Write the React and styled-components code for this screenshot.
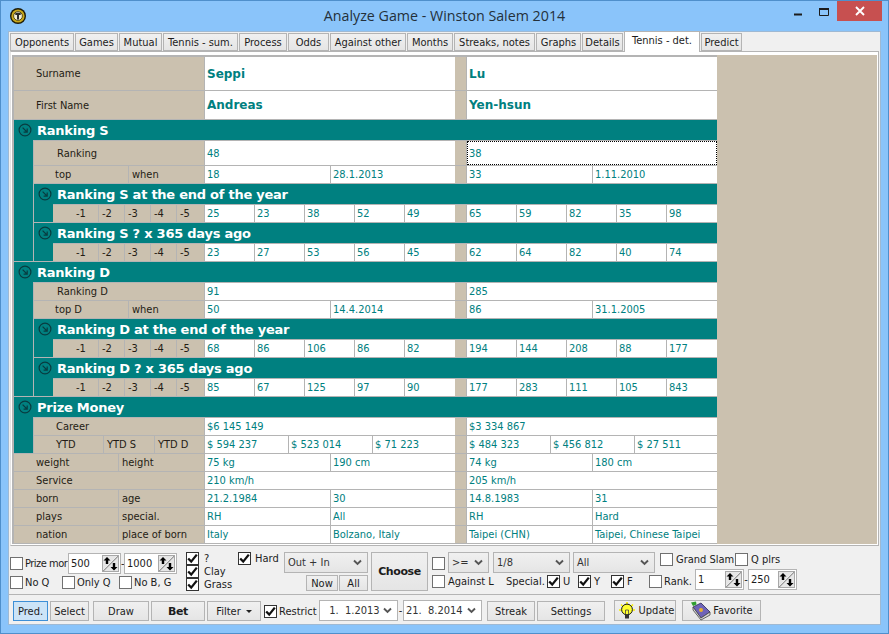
import React from 'react'
import styled, {createGlobalStyle} from 'styled-components'

const LINE = '#b4b4b4'
const TAN = '#cbc1af'
const TEAL = '#008080'

const GlobalStyle = createGlobalStyle`
  html, body {
    margin: 0;
    padding: 0;
    overflow: hidden;
    background: #8ac4fa;
  }
  * {
    box-sizing: border-box;
  }
`

const Window = styled.div`
  width: 889px;
  height: 634px;
  display: flex;
  flex-direction: column;
  padding: 0 7px 8px;
  background: #8ac4fa;
  border: 1px solid #4f8fcb;
  font-family: "DejaVu Sans Condensed", "Liberation Sans", Arial, sans-serif;
  font-size: 11px;
  color: #1c1c1c;
`

const TitleBar = styled.div`
  height: 30px;
  flex: none;
  display: grid;
  grid-template-columns: 1fr auto 1fr;
  align-items: start;
`

const AppIcon = styled.svg`
  width: 18px;
  height: 18px;
  margin: 6px 0 0 1px;
  display: block;
`

const Title = styled.div`
  font-family: "Open Sans", sans-serif;
  font-size: 14.25px;
  line-height: 30px;
  color: #24303a;
`

const WinControls = styled.div`
  display: flex;
  justify-content: flex-end;
  margin-right: -1px;
`

const WinGlyph = styled.svg`
  width: 26px;
  height: 20px;
  display: block;
`

const CloseBtn = styled.div`
  width: 45px;
  height: 20px;
  background: #c75050;
  display: flex;
  align-items: center;
  justify-content: center;
`

const Client = styled.div`
  flex: 1;
  min-height: 0;
  display: flex;
  flex-direction: column;
  background: #f0f0f0;
  border: 1px solid #9fb9d3;
`

const TabRow = styled.div`
  display: flex;
  gap: 1px;
  height: 19px;
  flex: none;
  padding: 1px 0 0 1px;
  position: relative;
  z-index: 1;
`

const Tab = styled.div`
  flex: none;
  width: ${p => p.$w}px;
  height: ${p => (p.$active ? 21 : 18)}px;
  margin-top: ${p => (p.$active ? -2 : 0)}px;
  padding-bottom: ${p => (p.$active ? 3 : 0)}px;
  display: flex;
  align-items: center;
  justify-content: center;
  white-space: nowrap;
  background: ${p => (p.$active ? '#fff' : 'linear-gradient(#f0f0f0, #e5e5e5)')};
  border: 1px solid ${LINE};
  border-bottom: ${p => (p.$active ? 'none' : `1px solid ${LINE}`)};
`

const Panel = styled.div`
  flex: none;
  height: 495px;
  margin: 0 1px 0 1px;
  padding: 3px 1px 1px 1px;
  background: #fff;
  border: 1px solid ${LINE};
  border-left-color: #e4e4e4;
`

const Sheet = styled.div`
  height: 489px;
  background: ${TAN};
  border-left: 2px solid ${LINE};
`

const Table = styled.div`
  width: 703px;
  border-top: 2px solid ${LINE};
`

const Row = styled.div`
  display: flex;
  height: ${p => p.$h || 18}px;
  background: ${TAN};
  border-bottom: 1px solid ${LINE};
`

const LabelArea = styled.div`
  flex: 1;
  min-width: 0;
  display: flex;
`

const Label = styled.div`
  width: ${p => (p.$w ? `${p.$w}px` : 'auto')};
  flex: ${p => (p.$w ? 'none' : '1')};
  padding-left: ${p => p.$pl}px;
  display: flex;
  align-items: center;
  white-space: nowrap;
  border-right: 1px solid ${LINE};
  color: #241c14;
`

const ValueArea = styled.div`
  width: 512px;
  flex: none;
  display: grid;
  grid-template-columns: 250px 12px 250px;
`

const Gap = styled.div`
  border-right: 1px solid ${LINE};
`

const Player = styled.div`
  display: grid;
  grid-template-columns: ${p => p.$cols};
  background: #fff;
`

const Value = styled.div`
  padding-left: 2px;
  display: flex;
  align-items: center;
  white-space: nowrap;
  overflow: hidden;
  color: ${TEAL};
  font-family: ${p => (p.$big ? '"DejaVu Sans", sans-serif' : 'inherit')};
  font-size: ${p => (p.$big ? 12 : 11)}px;
  font-weight: ${p => (p.$big ? 700 : 400)};
  outline: ${p => (p.$focus ? '1px dotted #000' : 'none')};
  outline-offset: -1px;

  &:not(:last-child) {
    border-right: 1px solid ${LINE};
  }
`

const Head = styled.div`
  height: 20px;
  display: flex;
  align-items: center;
  background: ${TEAL};
  color: #fff;
  font-family: "DejaVu Sans", sans-serif;
  font-weight: 700;
  font-size: 13px;
  letter-spacing: -0.25px;
  padding-left: 4px;
  white-space: nowrap;
`

const HeadIcon = styled.svg`
  width: 14px;
  height: 14px;
  margin-right: 5px;
  flex: none;
  display: block;
`

const Indent = styled.div`
  display: flex;
  background: ${TEAL};
`

const Gutter = styled.div`
  width: 19px;
  flex: none;
  border-bottom: 1px solid ${LINE};
`

const Content = styled.div`
  flex: 1;
  min-width: 0;
  border-top: 1px solid ${LINE};
  border-left: ${p => (p.$line ? `1px solid ${LINE}` : 'none')};
`

const FilterBar = styled.div`
  flex: none;
  height: 49px;
  display: flex;
  align-items: flex-start;
  padding: 6px 0 0 1px;
  border-bottom: 1px solid ${LINE};
  margin-top: 0;
`

const Col = styled.div`
  display: flex;
  flex-direction: column;
  flex: none;
  width: ${p => (p.$w ? `${p.$w}px` : 'auto')};
  margin-left: ${p => p.$ml || 0}px;
  margin-top: ${p => p.$mt || 0}px;
`

const CtlRow = styled.div`
  display: flex;
  align-items: ${p => p.$align || 'flex-start'};
  margin-top: ${p => p.$mt || 0}px;
  height: ${p => (p.$h ? `${p.$h}px` : 'auto')};
  justify-content: ${p => p.$justify || 'flex-start'};
`

const CheckWrap = styled.div`
  display: flex;
  align-items: center;
  gap: ${p => p.$gap ?? 3}px;
  flex: none;
  width: ${p => (p.$w ? `${p.$w}px` : 'auto')};
  height: 13px;
  margin-left: ${p => p.$ml || 0}px;
  margin-top: ${p => p.$mt || 0}px;
  white-space: nowrap;
  letter-spacing: ${p => p.$ls || 0}px;
`

const Box = styled.span`
  width: 13px;
  height: 13px;
  flex: none;
  display: block;
  background: #fff;
  border: 1px solid ${p => (p.$on ? '#333' : '#707070')};
`

const Tick = styled.svg`
  width: 11px;
  height: 11px;
  display: block;
`

const Spin = styled.div`
  width: ${p => p.$w}px;
  height: 21px;
  flex: none;
  display: flex;
  align-items: center;
  justify-content: space-between;
  padding: 0 1px 0 2px;
  background: #fff;
  border: 1px solid ${LINE};
  margin-top: ${p => p.$mt || 0}px;
`

const SpinBtn = styled.svg`
  width: 17px;
  height: 17px;
  flex: none;
  display: block;
`

const Dash = styled.span`
  width: ${p => p.$w}px;
  flex: none;
  text-align: center;
  line-height: ${p => p.$lh || 21}px;
  margin-top: ${p => p.$mt || 0}px;
`

const Drop = styled.div`
  width: ${p => p.$w}px;
  height: 21px;
  flex: none;
  display: flex;
  align-items: center;
  justify-content: space-between;
  padding: 0 5px 0 ${p => p.$pl ?? 3}px;
  margin-left: ${p => p.$ml || 0}px;
  margin-top: ${p => p.$mt || 0}px;
  color: #333;
  white-space: pre;
  background: ${p => (p.$white ? '#fff' : 'linear-gradient(#f0f0f0, #e5e5e5)')};
  border: 1px solid ${LINE};
`

const Chevron = styled.svg`
  width: 9px;
  height: 7px;
  flex: none;
  display: block;
`

const Btn = styled.div`
  width: ${p => p.$w}px;
  height: ${p => p.$h || 20}px;
  flex: none;
  display: flex;
  align-items: center;
  justify-content: center;
  gap: ${p => p.$gap || 0}px;
  margin-left: ${p => p.$ml || 0}px;
  margin-top: ${p => p.$mt || 0}px;
  font-family: ${p => (p.$bold ? '"DejaVu Sans", sans-serif' : 'inherit')};
  font-weight: ${p => (p.$bold ? 700 : 400)};
  letter-spacing: ${p => (p.$bold ? -0.4 : 0)}px;
  white-space: nowrap;
  background: ${p => (p.$primary ? '#cce4f7' : 'linear-gradient(#f0f0f0, #e5e5e5)')};
  border: 1px solid ${p => (p.$primary ? '#3d8fd6' : LINE)};
`

const Caret = styled.span`
  width: 0;
  height: 0;
  border: 3px solid transparent;
  border-top: 3px solid #222;
  border-bottom: 0;
  margin-left: 2px;
`

const ActionBar = styled.div`
  flex: 1;
  display: flex;
  align-items: flex-start;
  padding: 6px 0 0 4px;
`

const BtnIcon = styled.svg`
  width: 22px;
  height: 20px;
  flex: none;
  display: block;
`

const tabs = [
  ['Opponents', 64], ['Games', 43], ['Mutual', 43], ['Tennis - sum.', 75], ['Process', 48],
  ['Odds', 41], ['Against other', 76], ['Months', 46], ['Streaks, notes', 81], ['Graphs', 45],
  ['Details', 41], ['Tennis - det.', 76, true], ['Predict', 41],
]

const COLS = {
  1: '1fr',
  2: '126px 124px',
  3: '84px 84px 82px',
  5: 'repeat(5, 50px)',
}

const yearLabels = [
  ['-1', 46, 23], ['-2', 26, 3], ['-3', 26, 3], ['-4', 26, 3], ['-5', 28, 3],
]

function DataRow({labels, left, right, h, big, focus}) {
  const cols = COLS[left.length]
  return (
    <Row $h={h}>
      <LabelArea>
        {labels.map(([text, w, pl]) => <Label key={text} $w={w} $pl={pl}>{text}</Label>)}
      </LabelArea>
      <ValueArea>
        <Player $cols={cols}>
          {left.map((v, i) => <Value key={i} $big={big}>{v}</Value>)}
        </Player>
        <Gap />
        <Player $cols={cols}>
          {right.map((v, i) => <Value key={i} $big={big} $focus={focus}>{v}</Value>)}
        </Player>
      </ValueArea>
    </Row>
  )
}

function Arrow() {
  return (
    <HeadIcon viewBox="0 0 14 14">
      <circle cx="7" cy="7" r="5.9" fill="none" stroke="#083c40" strokeWidth="1.2" />
      <path d="M4.6 4.6 L9 9 M9.2 5.6 V9.2 H5.6" fill="none" stroke="#083c40" strokeWidth="1.2" />
    </HeadIcon>
  )
}

function Section({title, line, children}) {
  return (
    <>
      <Head><Arrow />{title}</Head>
      <Indent>
        <Gutter />
        <Content $line={line}>{children}</Content>
      </Indent>
    </>
  )
}

function SubSection({title, left, right}) {
  return (
    <Section title={title}>
      <DataRow labels={yearLabels} left={left} right={right} />
    </Section>
  )
}

function Check({on, children, w, ml, mt, gap, ls}) {
  return (
    <CheckWrap $w={w} $ml={ml} $mt={mt} $gap={gap} $ls={ls}>
      <Box $on={on}>
        {on && (
          <Tick viewBox="0 0 11 11">
            <path d="M1.2 5.5 L4.2 8.6 L9.8 1.6" fill="none" stroke="#111" strokeWidth="2.3" />
          </Tick>
        )}
      </Box>
      {children}
    </CheckWrap>
  )
}

function Spinner({w, value, mt}) {
  return (
    <Spin $w={w} $mt={mt}>
      {value}
      <SpinBtn viewBox="0 0 17 17">
        <rect x="0.5" y="0.5" width="16" height="16" fill="#e6e6e6" stroke="#a8a8a8" />
        <path d="M1 16 L16 1" stroke="#9a9a9a" strokeWidth="1.4" />
        <path d="M1 15 L15 1" stroke="#fff" strokeWidth="0.7" />
        <path d="M5 2 L8.5 5.6 H6.2 V9 H3.8 V5.6 H1.5 Z" fill="#000" />
        <path d="M12 15.5 L8.5 11.9 H10.8 V8 H13.2 V11.9 H15.5 Z" fill="#000" />
      </SpinBtn>
    </Spin>
  )
}

function Select({w, value, ml, mt, white, pl}) {
  return (
    <Drop $w={w} $ml={ml} $mt={mt} $white={white} $pl={pl}>
      {value}
      <Chevron viewBox="0 0 9 7">
        <path d="M1 1.5 L4.5 5 L8 1.5" fill="none" stroke="#555" strokeWidth="1.9" />
      </Chevron>
    </Drop>
  )
}

export default function App() {
  return (
    <Window>
      <GlobalStyle />
      <TitleBar>
        <AppIcon viewBox="0 0 18 18">
          <circle cx="9" cy="9" r="8" fill="#1c1a08" />
          <circle cx="9" cy="9" r="6.6" fill="#c9a81c" />
          <circle cx="9" cy="9" r="4.4" fill="#f4efd8" stroke="#3a3208" strokeWidth="0.8" />
          <path d="M6.3 5.8 H11.7 V8 H10 V12.6 H8 V8 H6.3 Z" fill="#2a2a2a" />
        </AppIcon>
        <Title>Analyze Game - Winston Salem 2014</Title>
        <WinControls>
          <WinGlyph viewBox="0 0 26 20">
            <rect x="9" y="12.5" width="8" height="2" fill="#1c1c1c" />
          </WinGlyph>
          <WinGlyph viewBox="0 0 26 20">
            <path d="M8.5 8 H17.5 V14.5 H8.5 Z" fill="none" stroke="#1c1c1c" />
            <rect x="8" y="7" width="10" height="2" fill="#1c1c1c" />
          </WinGlyph>
          <CloseBtn>
            <svg width="10" height="10" viewBox="0 0 10 10">
              <path d="M1 1 L9 9 M9 1 L1 9" stroke="#fff" strokeWidth="1.9" />
            </svg>
          </CloseBtn>
        </WinControls>
      </TitleBar>
      <Client>
        <TabRow>
          {tabs.map(([text, w, active]) => <Tab key={text} $w={w} $active={active}>{text}</Tab>)}
        </TabRow>
        <Panel>
          <Sheet>
            <Table>
              <DataRow h={34} big labels={[['Surname', 0, 22]]} left={['Seppi']} right={['Lu']} />
              <DataRow h={29} big labels={[['First Name', 0, 22]]} left={['Andreas']} right={['Yen-hsun']} />

              <Section title="Ranking S" line>
                <DataRow h={25} focus labels={[['Ranking', 0, 23]]} left={['48']} right={['38']} />
                <DataRow
                  labels={[['top', 95, 21], ['when', 76, 3]]}
                  left={['18', '28.1.2013']}
                  right={['33', '1.11.2010']}
                />
                <SubSection
                  title="Ranking S at the end of the year"
                  left={['25', '23', '38', '52', '49']}
                  right={['65', '59', '82', '35', '98']}
                />
                <SubSection
                  title="Ranking S ? x 365 days ago"
                  left={['23', '27', '53', '56', '45']}
                  right={['62', '64', '82', '40', '74']}
                />
              </Section>

              <Section title="Ranking D" line>
                <DataRow labels={[['Ranking D', 0, 23]]} left={['91']} right={['285']} />
                <DataRow
                  labels={[['top D', 95, 21], ['when', 76, 3]]}
                  left={['50', '14.4.2014']}
                  right={['86', '31.1.2005']}
                />
                <SubSection
                  title="Ranking D at the end of the year"
                  left={['68', '86', '106', '86', '82']}
                  right={['194', '144', '208', '88', '177']}
                />
                <SubSection
                  title="Ranking D ? x 365 days ago"
                  left={['85', '67', '125', '97', '90']}
                  right={['177', '283', '111', '105', '843']}
                />
              </Section>

              <Section title="Prize Money" line>
                <DataRow labels={[['Career', 0, 22]]} left={['$6 145 149']} right={['$3 334 867']} />
                <DataRow
                  labels={[['YTD', 70, 22], ['YTD S', 51, 3], ['YTD D', 50, 3]]}
                  left={['$ 594 237', '$ 523 014', '$ 71 223']}
                  right={['$ 484 323', '$ 456 812', '$ 27 511']}
                />
              </Section>

              <DataRow
                labels={[['weight', 105, 22], ['height', 86, 3]]}
                left={['75 kg', '190 cm']}
                right={['74 kg', '180 cm']}
              />
              <DataRow labels={[['Service', 0, 22]]} left={['210 km/h']} right={['205 km/h']} />
              <DataRow
                labels={[['born', 105, 22], ['age', 86, 3]]}
                left={['21.2.1984', '30']}
                right={['14.8.1983', '31']}
              />
              <DataRow
                labels={[['plays', 105, 22], ['special.', 86, 3]]}
                left={['RH', 'All']}
                right={['RH', 'Hard']}
              />
              <DataRow
                labels={[['nation', 105, 22], ['place of born', 86, 3]]}
                left={['Italy', 'Bolzano, Italy']}
                right={['Taipei (CHN)', 'Taipei, Chinese Taipei']}
              />
            </Table>
          </Sheet>
        </Panel>

        <FilterBar>
          <Col $w={168} $mt={1}>
            <CtlRow $align="center">
              <Check w={58} gap={2} ls={-0.5}>Prize mor</Check>
              <Spinner w={53} value="500" />
              <Dash $w={3}>-</Dash>
              <Spinner w={53} value="1000" />
            </CtlRow>
            <CtlRow $mt={2}>
              <Check w={52} gap={2}>No Q</Check>
              <Check w={57} gap={2}>Only Q</Check>
              <Check gap={2}>No B, G</Check>
            </CtlRow>
          </Col>
          <Col $ml={8} $w={52}>
            <Check on gap={5}>?</Check>
            <Check on gap={5}>Clay</Check>
            <Check on gap={5}>Grass</Check>
          </Col>
          <Col $w={46}>
            <Check on gap={4}>Hard</Check>
          </Col>
          <Col $w={84}>
            <Select w={84} value="Out + In" />
            <CtlRow $mt={2} $justify="flex-end">
              <Btn $w={32} $h={16}>Now</Btn>
              <Btn $w={29} $h={16} $ml={1}>All</Btn>
            </CtlRow>
          </Col>
          <Btn $w={57} $h={39} $ml={3} $bold>Choose</Btn>
          <Col $ml={4}>
            <CtlRow>
              <Check mt={5} />
              <Select w={41} value=">=" ml={3} />
              <Select w={77} value="1/8" ml={4} />
              <Select w={82} value="All" ml={3} />
              <Check w={75} ml={5} mt={1}>Grand Slam</Check>
              <Check mt={1}>Q plrs</Check>
            </CtlRow>
            <CtlRow $mt={2}>
              <Check w={74}>Against L</Check>
              <CheckWrap $w={41}>Special.</CheckWrap>
              <Check on w={31}>U</Check>
              <Check on w={33}>Y</Check>
              <Check on w={38}>F</Check>
              <Check w={46} gap={2}>Rank.</Check>
              <Spinner w={49} value="1" mt={-6} />
              <Dash $w={4} $mt={-6}>-</Dash>
              <Spinner w={49} value="250" mt={-6} />
            </CtlRow>
          </Col>
        </FilterBar>

        <ActionBar>
          <Btn $w={35} $primary>Pred.</Btn>
          <Btn $w={39} $ml={2}>Select</Btn>
          <Btn $w={56} $ml={4}>Draw</Btn>
          <Btn $w={54} $ml={2} $bold>Bet</Btn>
          <Btn $w={54} $ml={2} $gap={3}>Filter <Caret /></Btn>
          <Check on w={55} ml={3} mt={4} gap={2}>Restrict</Check>
          <Select w={79} value="  1.  1.2013" mt={-1} white />
          <Dash $w={5} $mt={-1}>-</Dash>
          <Select w={79} value="21.  8.2014" mt={-1} white pl={2} />
          <Btn $w={48} $ml={5}>Streak</Btn>
          <Btn $w={68} $ml={2}>Settings</Btn>
          <Btn $w={62} $h={21} $ml={9} $mt={-1} $gap={1}>
            <BtnIcon viewBox="0 0 22 20">
              <path d="M11 1 V3 M3 9 H5 M17 9 H19 M5 3.5 L6.5 5 M17 3.5 L15.5 5" stroke="#f7f000" strokeWidth="1.6" />
              <circle cx="11" cy="8.5" r="5.4" fill="#ffff30" stroke="#111" />
              <path d="M9.5 13 V9 H12.5 V13" fill="none" stroke="#444" strokeWidth="0.8" />
              <rect x="9" y="13.5" width="4" height="4" fill="#333" />
            </BtnIcon>
            Update
          </Btn>
          <Btn $w={79} $h={21} $ml={6} $mt={-1} $gap={1}>
            <BtnIcon viewBox="0 0 22 20">
              <path d="M3 6 L11 2 L20 11 L11 17 Z" fill="#6f63b8" stroke="#2a2a55" strokeWidth="0.8" />
              <path d="M3 6 L3 9 L11 19 L20 14 L20 11 L11 17 Z" fill="#d8d8d8" stroke="#444" strokeWidth="0.8" />
              <circle cx="11" cy="9" r="2" fill="#e8b030" />
              <path d="M1 1.5 L6 0.5 L6.5 3.5 L3 5 Z" fill="#2f9e2f" />
            </BtnIcon>
            Favorite
          </Btn>
        </ActionBar>
      </Client>
    </Window>
  )
}
